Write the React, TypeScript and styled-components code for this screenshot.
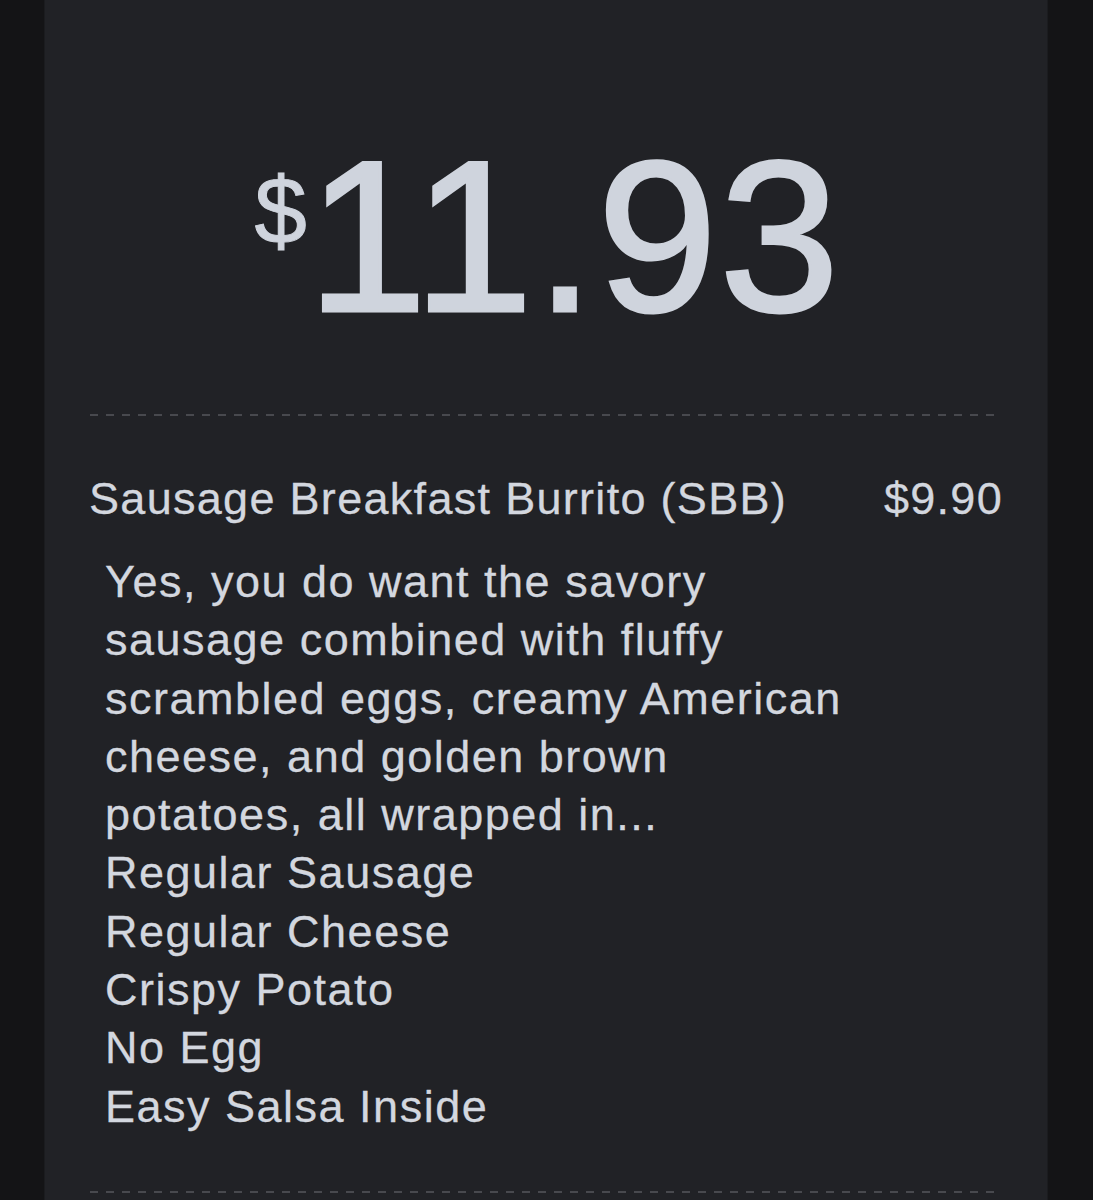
import React from "react";
import styled, { createGlobalStyle } from "styled-components";

const GlobalStyle = createGlobalStyle`
  html, body {
    margin: 0;
    padding: 0;
    background: #141416;
  }
  body {
    font-family: "Liberation Sans", Arial, Helvetica, sans-serif;
    -webkit-font-smoothing: antialiased;
  }
`;

const Page = styled.div`
  background: #141416;
  display: flex;
  justify-content: flex-start;
  padding: 0 45px 0 44px;
  overflow: hidden;
  height: 1200px;
  box-sizing: border-box;
`;

const Card = styled.div`
  flex: 1;
  background: #212226;
  border-left: 1px solid #1b1c1f;
  border-right: 1px solid #1b1c1f;
  padding: 128px 44px 0 44px;
  display: flex;
  flex-direction: column;
  color: #d3d7df;
`;

const Total = styled.div`
  display: flex;
  justify-content: center;
  align-items: flex-start;
  color: #cfd4dd;
  line-height: 1;
`;

const Currency = styled.span`
  font-size: 94px;
  margin-top: 36px;
  margin-left: 4px;
  -webkit-text-stroke: 1px #cfd4dd;
`;

const Amount = styled.span`
  font-size: 216px;
  letter-spacing: 2px;
  -webkit-text-stroke: 3px #cfd4dd;
`;

const Divider = styled.div<{ $top: number }>`
  height: 2px;
  margin: ${(p) => p.$top}px 1px 0 1px;
  background-image: repeating-linear-gradient(
    to right,
    #48494e 0 8px,
    transparent 8px 16px
  );
`;

const ItemRow = styled.div`
  display: flex;
  justify-content: space-between;
  align-items: baseline;
  margin-top: 54px;
  font-size: 45px;
  line-height: 58px;
  letter-spacing: 1.3px;
  -webkit-text-stroke: 0.3px #d3d7df;
`;

const ItemName = styled.span``;

const ItemPrice = styled.span``;

const Details = styled.div`
  margin-top: 25px;
  padding-left: 16px;
  font-size: 45px;
  line-height: 58.3px;
  letter-spacing: 1.5px;
  -webkit-text-stroke: 0.3px #d3d7df;
`;

const Description = styled.div`
  max-width: 752px;
`;

const Modifier = styled.div``;

const modifiers = [
  "Regular Sausage",
  "Regular Cheese",
  "Crispy Potato",
  "No Egg",
  "Easy Salsa Inside",
];

export default function App() {
  return (
    <>
      <GlobalStyle />
      <Page>
        <Card>
          <Total>
            <Currency>$</Currency>
            <Amount>11.93</Amount>
          </Total>
          <Divider $top={70} />
          <ItemRow>
            <ItemName>Sausage Breakfast Burrito (SBB)</ItemName>
            <ItemPrice>$9.90</ItemPrice>
          </ItemRow>
          <Details>
            <Description>
              Yes, you do want the savory sausage combined with fluffy
              scrambled eggs, creamy American cheese, and golden brown
              potatoes, all wrapped in...
            </Description>
            {modifiers.map((m) => (
              <Modifier key={m}>{m}</Modifier>
            ))}
          </Details>
          <Divider $top={55} />
        </Card>
      </Page>
    </>
  );
}
